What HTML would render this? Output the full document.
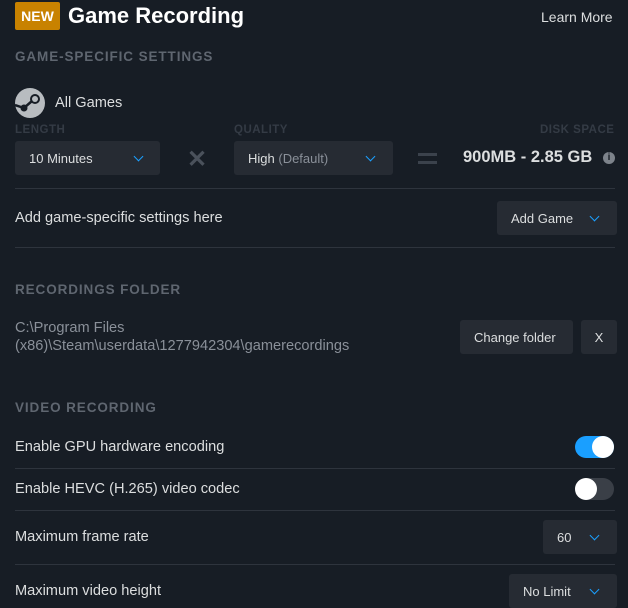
<!DOCTYPE html><html><head><style>
body{margin:0;width:628px;height:608px;background:#171d25;font-family:"Liberation Sans",sans-serif;color:#dcdedf;position:relative;overflow:hidden}
.a{position:absolute;white-space:nowrap}
.h{font-weight:bold;font-size:13.5px;color:#5f6670;letter-spacing:0.9px}
.l{font-weight:bold;font-size:11.5px;color:#343b45;letter-spacing:0.5px}
.box{position:absolute;background:#262b33;border-radius:3px;font-size:13px;color:#dcdedf;box-sizing:border-box}
.hr{position:absolute;left:15px;width:600px;height:1px;background:#2e343d}
.t{font-size:14.6px;color:#dcdedf}
.chev{position:absolute;width:6px;height:6px;border-right:1.6px solid #1a9fff;border-bottom:1.6px solid #1a9fff;transform:rotate(45deg)}
</style></head><body>
<div class="a" style="left:15px;top:2px;width:45px;height:28px;background:#c88200;border-radius:2px;color:#fff;font-weight:bold;font-size:14px;line-height:28px;text-align:center">NEW</div>
<div class="a" style="left:68px;top:2px;font-size:22px;font-weight:bold;color:#fff;line-height:28px">Game Recording</div>
<div class="a" style="left:541px;top:9px;font-size:14px;color:#dcdedf">Learn More</div>
<div class="a h" style="left:15px;top:49px">GAME-SPECIFIC SETTINGS</div>
<svg class="a" style="left:15px;top:88px" width="30" height="30" viewBox="0 0 30 30"><circle cx="15" cy="15" r="15" fill="#b8bcc0"/><circle cx="20" cy="11" r="5" fill="#171d25"/><circle cx="20" cy="11" r="3" fill="#b8bcc0"/><circle cx="9" cy="20" r="3.5" fill="#171d25"/><path d="M0 17 L9 20 L17 13" stroke="#171d25" stroke-width="2.5" fill="none"/></svg>
<div class="a t" style="left:55px;top:95px">All Games</div>
<div class="a l" style="left:15px;top:124px">LENGTH</div>
<div class="a l" style="left:234px;top:124px">QUALITY</div>
<div class="a l" style="left:540px;top:124px">DISK SPACE</div>
<div class="box" style="left:15px;top:141px;width:145px;height:34px;padding:10px 14px">10 Minutes<span class="chev" style="left:120px;top:12px"></span></div>
<div class="a" style="left:187px;top:145px;font-size:24px;color:#4a515b;font-weight:bold">✕</div>
<div class="box" style="left:234px;top:141px;width:159px;height:34px;padding:10px 14px">High <span style="color:#8a9099">(Default)</span><span class="chev" style="left:133px;top:12px"></span></div>
<div class="a" style="left:418px;top:153px;width:19px;height:3px;background:#3b424c"></div>
<div class="a" style="left:418px;top:161px;width:19px;height:3px;background:#3b424c"></div>
<div class="a" style="left:463px;top:148px;font-size:16.5px;font-weight:bold;color:#dcdedf">900MB - 2.85 GB</div>
<div class="a" style="left:603px;top:152px;width:12px;height:12px;border-radius:50%;background:#7d838b;color:#171d25;font-size:10px;font-weight:bold;text-align:center;line-height:12px">i</div>
<div class="hr" style="top:188px"></div>
<div class="a t" style="left:15px;top:210px">Add game-specific settings here</div>
<div class="box" style="left:497px;top:201px;width:120px;height:34px;padding:10px 14px">Add Game<span class="chev" style="left:94px;top:12px"></span></div>
<div class="hr" style="top:247px"></div>
<div class="a h" style="left:15px;top:282px">RECORDINGS FOLDER</div>
<div class="a" style="left:15px;top:319px;font-size:14.6px;color:#8a9099;line-height:18px">C:\Program Files<br>(x86)\Steam\userdata\1277942304\gamerecordings</div>
<div class="box" style="left:460px;top:320px;width:113px;height:34px;padding:10px 14px">Change folder</div>
<div class="box" style="left:581px;top:320px;width:36px;height:34px;padding:10px 0;text-align:center">X</div>
<div class="a h" style="left:15px;top:400px">VIDEO RECORDING</div>
<div class="a t" style="left:15px;top:439px">Enable GPU hardware encoding</div>
<div class="a" style="left:575px;top:436px;width:39px;height:22px;border-radius:11px;background:#1a9fff"></div>
<div class="a" style="left:592px;top:436px;width:22px;height:22px;border-radius:50%;background:#fff"></div>
<div class="hr" style="top:468px"></div>
<div class="a t" style="left:15px;top:481px">Enable HEVC (H.265) video codec</div>
<div class="a" style="left:575px;top:478px;width:39px;height:22px;border-radius:11px;background:#3a3f47"></div>
<div class="a" style="left:575px;top:478px;width:22px;height:22px;border-radius:50%;background:#fff"></div>
<div class="hr" style="top:510px"></div>
<div class="a t" style="left:15px;top:529px">Maximum frame rate</div>
<div class="box" style="left:543px;top:520px;width:74px;height:34px;padding:10px 14px">60<span class="chev" style="left:48px;top:12px"></span></div>
<div class="hr" style="top:564px"></div>
<div class="a t" style="left:15px;top:583px">Maximum video height</div>
<div class="box" style="left:509px;top:574px;width:108px;height:34px;padding:10px 14px">No Limit<span class="chev" style="left:82px;top:12px"></span></div>
</body></html>
